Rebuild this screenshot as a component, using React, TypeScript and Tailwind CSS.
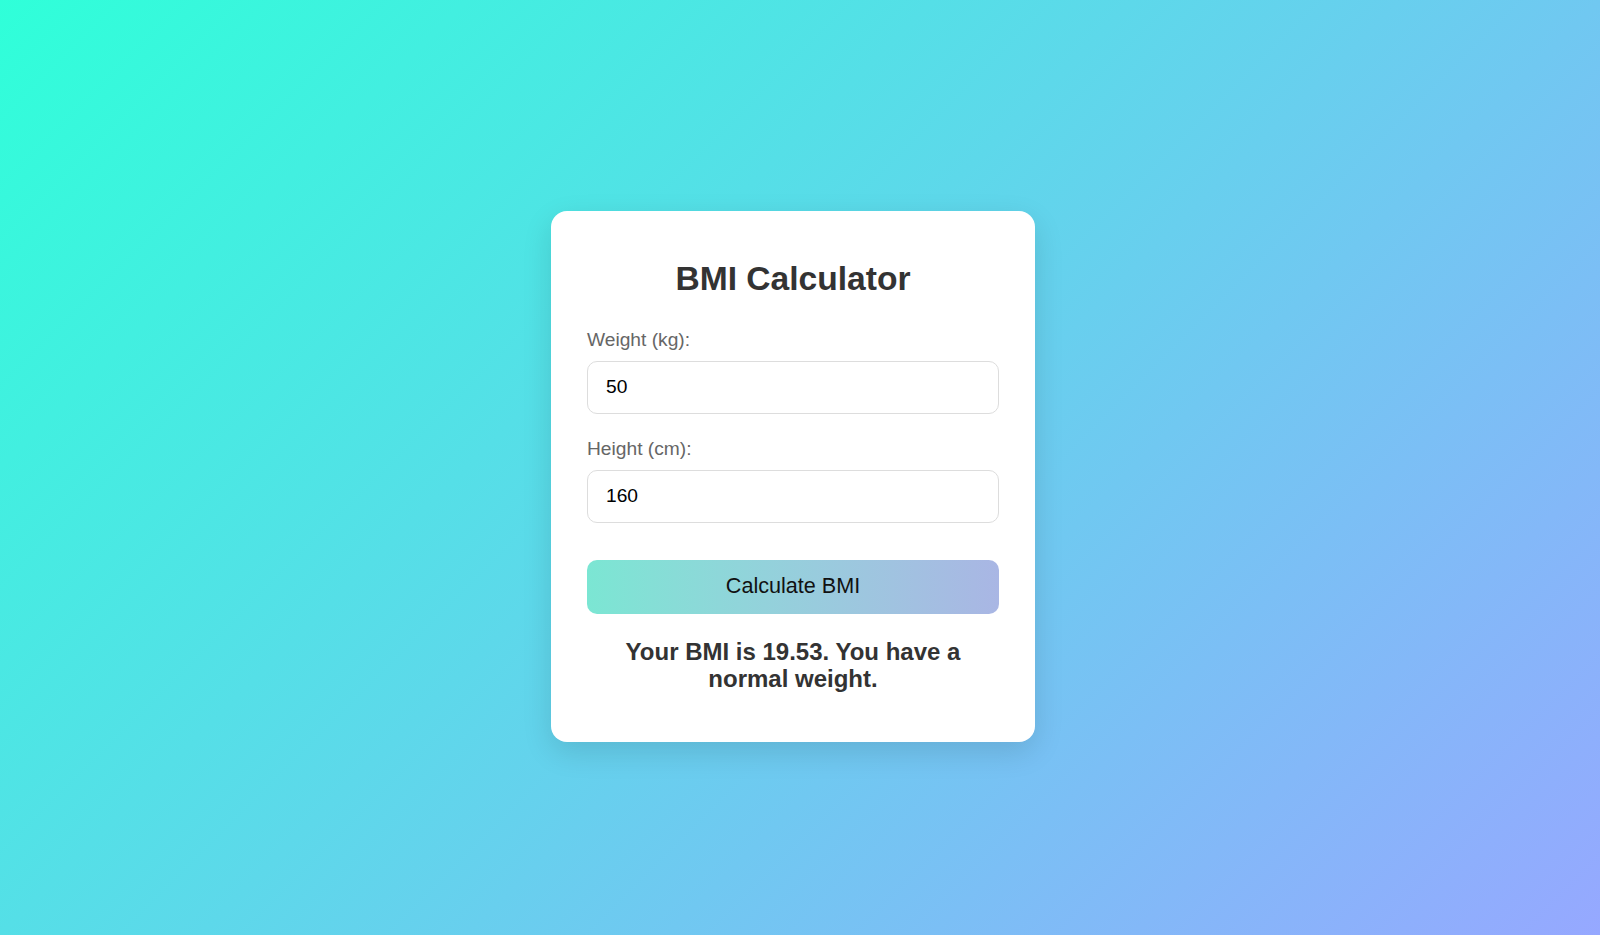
export default function App() {
  return (
    <div className="min-h-screen w-full flex items-center justify-center pr-[14px] pt-[17px] bg-[linear-gradient(135deg,#2fffd9,#96a8ff)] font-['Liberation_Sans',Arial,sans-serif]">
      <div className="w-[484px] bg-white rounded-2xl px-[36px] pt-[49px] pb-[50px] shadow-[0_10px_30px_rgba(0,0,0,0.12)]">
        <h1 className="text-[33.6px] leading-[38px] font-bold text-[#333] text-center">BMI Calculator</h1>

        <label className="block mt-[31px] text-[19.2px] leading-[22px] text-[#666]">Weight (kg):</label>
        <input
          type="number"
          defaultValue="50"
          className="block w-full mt-[10px] h-[53px] px-[18px] text-[19.2px] text-black border border-[#ddd] rounded-[10px] outline-none"
        />

        <label className="block mt-[24px] text-[19.2px] leading-[22px] text-[#666]">Height (cm):</label>
        <input
          type="number"
          defaultValue="160"
          className="block w-full mt-[10px] h-[53px] px-[18px] text-[19.2px] text-black border border-[#ddd] rounded-[10px] outline-none"
        />

        <button className="block w-full mt-[37px] h-[54px] rounded-[10px] bg-gradient-to-r from-[#7be6d3] to-[#a9b6e4] text-[21.6px] text-[#111]">
          Calculate BMI
        </button>

        <p className="mt-[24px] text-[24px] leading-[27px] font-bold text-[#333] text-center px-[20px]">
          Your BMI is 19.53. You have a normal weight.
        </p>
      </div>
    </div>
  );
}
